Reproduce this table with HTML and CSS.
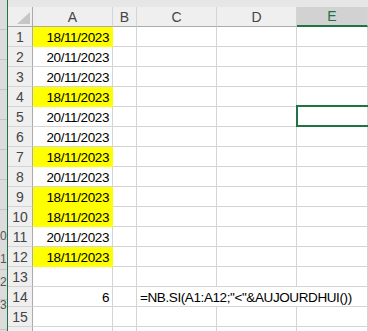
FILE: index.html
```html
<!DOCTYPE html>
<html>
  <head>
    <link rel="stylesheet" href="styles.css">
  </head>
  <body>
    <div class="frame">
      <div class="side">
        <span>0</span>
        <span>1</span>
        <span>2</span>
        <span>3</span>
      </div>
      <div class="edge"></div>
      <div class="sheet">
        <div class="topbar"></div>
        <div class="grid">
          <div class="hd corner"><div class="tri"></div></div>
          <div class="hd col">A</div>
          <div class="hd col">B</div>
          <div class="hd col">C</div>
          <div class="hd col">D</div>
          <div class="hd col active">E</div>

          <div class="hd row">1</div><div class="c fill">18/11/2023</div><div class="c"></div><div class="c"></div><div class="c"></div><div class="c"></div>
          <div class="hd row">2</div><div class="c">20/11/2023</div><div class="c"></div><div class="c"></div><div class="c"></div><div class="c"></div>
          <div class="hd row">3</div><div class="c">20/11/2023</div><div class="c"></div><div class="c"></div><div class="c"></div><div class="c"></div>
          <div class="hd row">4</div><div class="c fill">18/11/2023</div><div class="c"></div><div class="c"></div><div class="c"></div><div class="c"></div>
          <div class="hd row">5</div><div class="c">20/11/2023</div><div class="c"></div><div class="c"></div><div class="c"></div><div class="c"></div>
          <div class="hd row">6</div><div class="c">20/11/2023</div><div class="c"></div><div class="c"></div><div class="c"></div><div class="c"></div>
          <div class="hd row">7</div><div class="c fill">18/11/2023</div><div class="c"></div><div class="c"></div><div class="c"></div><div class="c"></div>
          <div class="hd row">8</div><div class="c">20/11/2023</div><div class="c"></div><div class="c"></div><div class="c"></div><div class="c"></div>
          <div class="hd row">9</div><div class="c fill">18/11/2023</div><div class="c"></div><div class="c"></div><div class="c"></div><div class="c"></div>
          <div class="hd row">10</div><div class="c fill">18/11/2023</div><div class="c"></div><div class="c"></div><div class="c"></div><div class="c"></div>
          <div class="hd row">11</div><div class="c">20/11/2023</div><div class="c"></div><div class="c"></div><div class="c"></div><div class="c"></div>
          <div class="hd row">12</div><div class="c fill">18/11/2023</div><div class="c"></div><div class="c"></div><div class="c"></div><div class="c"></div>
          <div class="hd row">13</div><div class="c"></div><div class="c"></div><div class="c"></div><div class="c"></div><div class="c"></div>
          <div class="hd row">14</div><div class="c">6</div><div class="c"></div><div class="c text">=NB.SI(A1:A12;"&lt;"&amp;AUJOURDHUI())</div>
          <div class="hd row">15</div><div class="c"></div><div class="c"></div><div class="c"></div><div class="c"></div><div class="c"></div>
          <div class="hd row"></div><div class="c"></div><div class="c"></div><div class="c"></div><div class="c"></div><div class="c"></div>
        </div>
        <!-- current cell E5 -->
        <div class="selection"></div>
      </div>
    </div>
  </body>
</html>
```

FILE: styles.css
```css
* {
  margin: 0;
  padding: 0;
  box-sizing: border-box;
}
body {
  background-color: white;
  font-family: "Liberation Sans", Arial, sans-serif;
  width: 368px;
  height: 331px;
  overflow: hidden;
}
.frame {
  display: flex;
  height: 331px;
}
.side {
  width: 7px;
  flex-shrink: 0;
  background-color: #dcdcdc;
  background-image: repeating-linear-gradient(to bottom, transparent 0, transparent 29px, #c4c4c4 29px, #c4c4c4 30px);
  overflow: hidden;
  display: flex;
  flex-direction: column;
  padding-top: 226px;
}
.side span {
  display: block;
  height: 23px;
  font-size: 12px;
  color: #555;
  line-height: 20px;
}
.edge {
  width: 1px;
  flex-shrink: 0;
  background-color: #217346;
}
.sheet {
  position: relative;
  flex: 1;
  overflow: hidden;
}
.topbar {
  height: 7px;
  background-color: #e6e6e6;
}
.grid {
  display: grid;
  grid-template-columns: 25px 80px 24px 80px 80px 1fr;
  grid-auto-rows: 20px;
}
.hd {
  background-color: #efefef;
  color: #444;
  font-size: 14px;
  display: flex;
  align-items: center;
  justify-content: center;
  border-right: 1px solid #d4d4d4;
  border-bottom: 1px solid #d4d4d4;
}
.col {
  border-bottom-color: #ababab;
}
.row {
  border-right-color: #ababab;
  padding-top: 1px;
}
.corner {
  border-right-color: #ababab;
  border-bottom-color: #ababab;
  position: relative;
}
.tri {
  position: absolute;
  right: 2px;
  bottom: 2px;
  width: 0;
  height: 0;
  border-left: 13px solid transparent;
  border-bottom: 12px solid #c6c6c6;
}
.col.active {
  background-color: #d2d2d2;
  color: #217346;
  border-bottom: 2px solid #217346;
}
.c {
  border-right: 1px solid #d4d4d4;
  border-bottom: 1px solid #d4d4d4;
  font-size: 13.5px;
  letter-spacing: -0.4px;
  color: #000;
  text-align: right;
  padding: 2px 3px 0 0;
  line-height: 17px;
  white-space: nowrap;
}
.c.fill {
  background-color: #ffff00;
  border-color: #ffff00;
}
/* formula text runs over C, D and E */
.c.text {
  grid-column: span 3;
  text-align: left;
  padding-left: 3px;
}
.selection {
  position: absolute;
  left: 288px;
  top: 105px;
  width: 90px;
  height: 22px;
  border: 2px solid #217346;
}
```
